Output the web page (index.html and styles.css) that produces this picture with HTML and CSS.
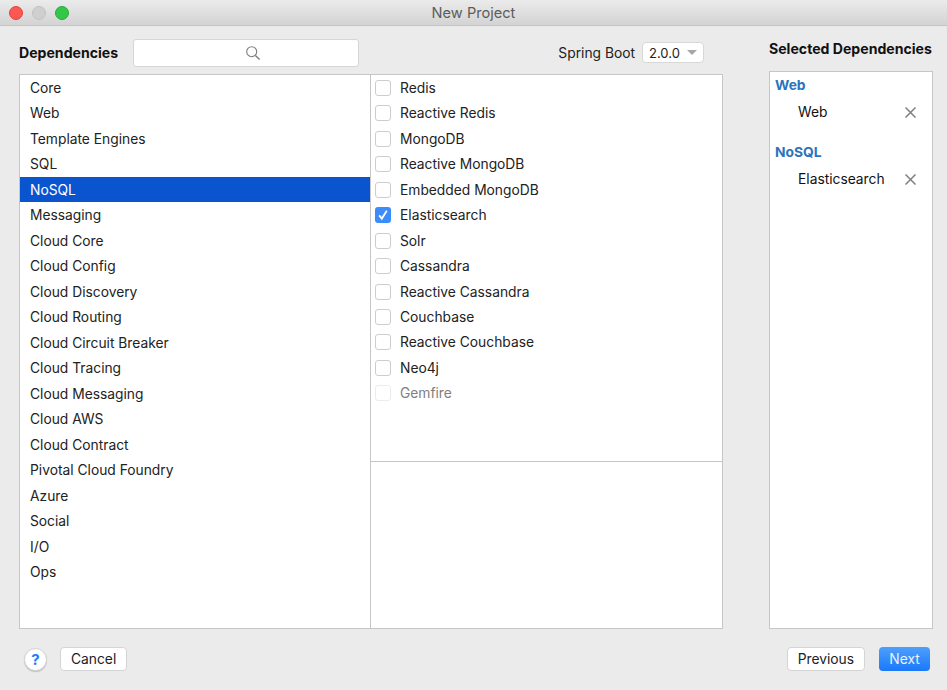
FILE: index.html
```html
<!DOCTYPE html>
<html lang="en">
  <head>
    <meta charset="UTF-8" />
    <title>New Project</title>
    <link rel="stylesheet" href="styles.css">
  </head>
  <body>
    <div class="window">
      <div class="titlebar">
        <div class="lights">
          <span class="light red"></span>
          <span class="light gray"></span>
          <span class="light green"></span>
        </div>
        <div class="title">New Project</div>
      </div>

      <div class="main">
        <div class="left">
          <div class="toolbar">
            <div class="heading">Dependencies</div>
            <div class="search">
              <svg width="16" height="16" viewBox="0 0 16 16" fill="none" stroke="#7d7d7d" stroke-width="1.1">
                <circle cx="6.7" cy="6.7" r="5" />
                <path d="M10.4 10.4 L14.6 14.6" stroke-width="1.4" />
              </svg>
            </div>
            <div class="version">
              <span>Spring Boot</span>
              <div class="select">2.0.0<i class="caret"></i></div>
            </div>
          </div>

          <div class="lists">
            <ul class="categories">
              <li>Core</li>
              <li>Web</li>
              <li>Template Engines</li>
              <li>SQL</li>
              <li class="current">NoSQL</li>
              <li>Messaging</li>
              <li>Cloud Core</li>
              <li>Cloud Config</li>
              <li>Cloud Discovery</li>
              <li>Cloud Routing</li>
              <li>Cloud Circuit Breaker</li>
              <li>Cloud Tracing</li>
              <li>Cloud Messaging</li>
              <li>Cloud AWS</li>
              <li>Cloud Contract</li>
              <li>Pivotal Cloud Foundry</li>
              <li>Azure</li>
              <li>Social</li>
              <li>I/O</li>
              <li>Ops</li>
            </ul>
            <div class="right_pane">
              <ul class="checks">
                <li><span class="box"></span>Redis</li>
                <li><span class="box"></span>Reactive Redis</li>
                <li><span class="box"></span>MongoDB</li>
                <li><span class="box"></span>Reactive MongoDB</li>
                <li><span class="box"></span>Embedded MongoDB</li>
                <li>
                  <span class="box checked">
                    <svg width="16" height="16" viewBox="0 0 16 16" fill="none" stroke="#fff" stroke-width="1.8">
                      <path d="M4.2 8.4 L6.8 11.6 L11.8 3.8" />
                    </svg>
                  </span>Elasticsearch
                </li>
                <li><span class="box"></span>Solr</li>
                <li><span class="box"></span>Cassandra</li>
                <li><span class="box"></span>Reactive Cassandra</li>
                <li><span class="box"></span>Couchbase</li>
                <li><span class="box"></span>Reactive Couchbase</li>
                <li><span class="box"></span>Neo4j</li>
                <li class="disabled"><span class="box"></span>Gemfire</li>
              </ul>
              <div class="description"></div>
            </div>
          </div>
        </div>

        <div class="side">
          <div class="side_heading">Selected Dependencies</div>
          <div class="selected">
            <div class="group">Web</div>
            <div class="dep">
              <span>Web</span>
              <svg width="11" height="11" viewBox="0 0 11 11" stroke="#7f7f7f" stroke-width="1.5"><path d="M0.5 0.5 L10.5 10.5 M10.5 0.5 L0.5 10.5" /></svg>
            </div>
            <div class="group second">NoSQL</div>
            <div class="dep">
              <span>Elasticsearch</span>
              <svg width="11" height="11" viewBox="0 0 11 11" stroke="#7f7f7f" stroke-width="1.5"><path d="M0.5 0.5 L10.5 10.5 M10.5 0.5 L0.5 10.5" /></svg>
            </div>
          </div>
        </div>
      </div>

      <div class="footer">
        <div class="help">?</div>
        <div class="btn cancel">Cancel</div>
        <div class="spacer"></div>
        <div class="btn">Previous</div>
        <div class="btn primary">Next</div>
      </div>
    </div>
  </body>
</html>
```

FILE: styles.css
```css
* {
  margin: 0;
  padding: 0;
  box-sizing: border-box;
}

html,
body {
  height: 100%;
  background-color: #ebebeb;
}

body {
  font-family: "Inter", "Liberation Sans", sans-serif;
  font-size: 13.8px;
  color: #222;
  overflow: hidden;
}

li {
  list-style-type: none;
}

.window {
  display: flex;
  flex-direction: column;
  height: 690px;
}

.titlebar {
  position: relative;
  display: flex;
  align-items: center;
  justify-content: center;
  height: 26px;
  border-bottom: 1px solid #c4c4c4;
  border-radius: 5px 5px 0 0;
  background: linear-gradient(#ebebeb, #d3d3d3);
}

.lights {
  position: absolute;
  left: 9px;
  top: 6px;
  display: flex;
  gap: 9px;
}

.light {
  width: 14px;
  height: 14px;
  border-radius: 50%;
}

.red {
  background-color: #fc5753;
  border: 1px solid #e0443e;
}

.gray {
  background-color: #cfcfcf;
  border: 1px solid #c2c2c2;
}

.green {
  background-color: #33c748;
  border: 1px solid #27aa35;
}

.title {
  font-size: 14.6px;
  color: #5c5c5c;
}

.main {
  display: flex;
  height: 603px;
}

.left {
  width: 704px;
  margin-left: 19px;
}

.toolbar {
  display: flex;
  align-items: center;
  height: 48px;
  padding-top: 5px;
}

.heading,
.side_heading {
  font-weight: 700;
  font-size: 14.1px;
  color: #111;
}

.heading {
  width: 114px;
}

.search {
  display: flex;
  align-items: center;
  justify-content: center;
  width: 226px;
  height: 28px;
  padding-left: 13px;
  border: 1px solid #d6d6d6;
  border-radius: 3px;
  background-color: #fff;
}

.version {
  display: flex;
  align-items: center;
  gap: 7px;
  margin-left: auto;
  margin-right: 19px;
}

.select {
  display: flex;
  align-items: center;
  gap: 7px;
  width: 62px;
  height: 21px;
  padding-left: 6px;
  border: 1px solid #d8d8d8;
  border-radius: 4px;
  background-color: #fff;
  font-size: 13px;
}

.caret {
  border-left: 5px solid transparent;
  border-right: 5px solid transparent;
  border-top: 5px solid #a6a6a6;
}

.lists {
  display: flex;
  height: 555px;
  border: 1px solid #c6c6c6;
  background-color: #fff;
}

.categories {
  width: 351px;
  margin-top: -0.2px;
  border-right: 1px solid #c6c6c6;
}

.categories li {
  display: flex;
  align-items: center;
  height: 25.5px;
  padding-left: 10px;
}

.categories .current {
  background-color: #0b54cf;
  color: #fff;
}

.right_pane {
  display: flex;
  flex-direction: column;
  flex: 1;
}

.checks {
  height: 387px;
  padding-top: 0.3px;
  border-bottom: 1px solid #c6c6c6;
}

.checks li {
  display: flex;
  align-items: center;
  height: 25.45px;
  padding-left: 4px;
}

.box {
  display: flex;
  flex-shrink: 0;
  width: 16px;
  height: 16px;
  margin-right: 9px;
  border: 1px solid #cdcdcd;
  border-radius: 3px;
  background-color: #fff;
}

.box.checked {
  border: none;
  background-color: #3b8dfb;
}

.disabled {
  color: #808080;
}

.disabled .box {
  border-color: #ececec;
}

.side {
  width: 164px;
  margin-left: 46px;
}

.side_heading {
  height: 48px;
  padding-top: 14px;
  white-space: nowrap;
}

.selected {
  height: 558px;
  margin-top: -3px;
  padding-top: 3px;
  border: 1px solid #c6c6c6;
  background-color: #fff;
}

.group {
  height: 21px;
  line-height: 21px;
  padding-left: 5px;
  font-weight: 700;
  color: #2a74bd;
}

.group.second {
  margin-top: 14px;
}

.dep {
  display: flex;
  align-items: center;
  justify-content: space-between;
  height: 32px;
  padding: 0 16px 0 28px;
  color: #111;
}

.footer {
  display: flex;
  align-items: center;
  gap: 14px;
  height: 60px;
  padding: 0 17px 0 24px;
}

.spacer {
  flex: 1;
}

.help {
  width: 23px;
  height: 23px;
  line-height: 22px;
  border: 1px solid #d2d2d2;
  border-radius: 50%;
  background-color: #fff;
  box-shadow: 0 1px 1px #c4c4c4;
  color: #1e7cf6;
  font-weight: 700;
  font-size: 15px;
  text-align: center;
}

.btn {
  height: 24px;
  line-height: 23px;
  padding: 0 10px;
  border: 1px solid #d4d4d4;
  border-radius: 4px;
  background-color: #fff;
  text-align: center;
}

.btn.cancel {
  margin-left: -1px;
}

.btn.primary {
  width: 51px;
  padding: 0;
  border: none;
  background: linear-gradient(#4da0fb, #1a78fb);
  color: #e9f2fe;
  line-height: 24px;
}
```
